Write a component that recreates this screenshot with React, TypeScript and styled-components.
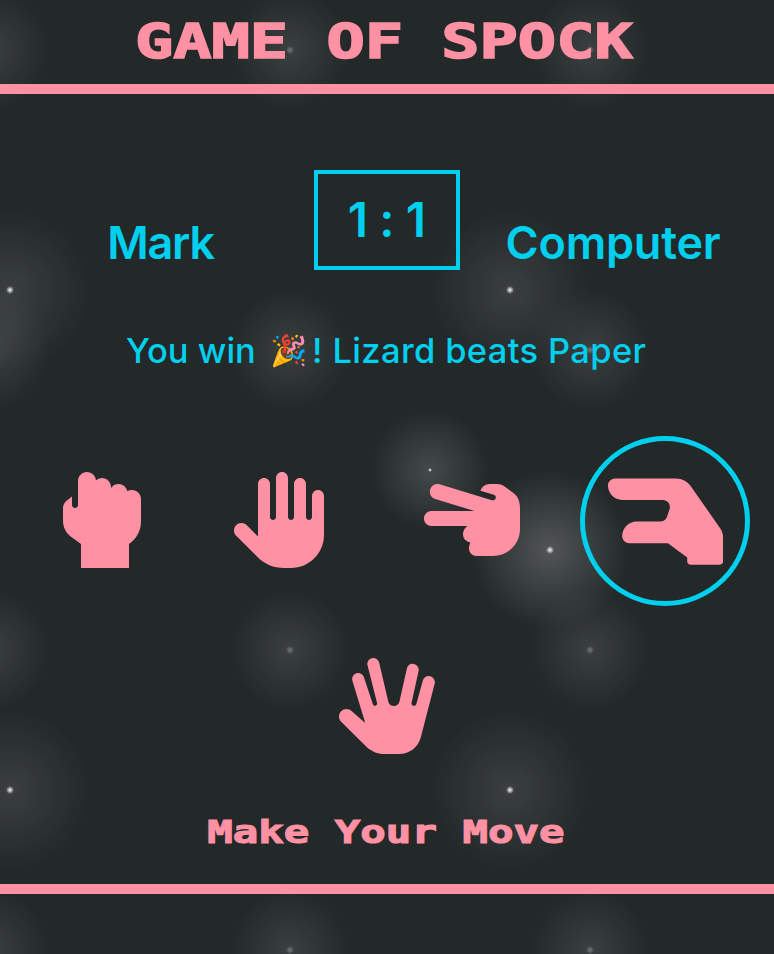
import React from "react";
import styled, { createGlobalStyle } from "styled-components";

const PINK = "#ff91a4";
const CYAN = "#00d0ee";

const GlobalStyle = createGlobalStyle`
  *, *::before, *::after { box-sizing: border-box; }
  html, body { margin: 0; padding: 0; background: #232829; }
`;

const Page = styled.div`
  height: 954px;
  overflow: hidden;
  color: ${CYAN};
  font-family: Inter, "Liberation Sans", sans-serif;
  background-color: #232829;
  background-image:
    radial-gradient(circle at 550px 550px, #fff, rgba(255, 255, 255, 0.2) 4px, transparent 80px),
    radial-gradient(circle at 430px 470px, #fff, rgba(255, 255, 255, 0.15) 2px, transparent 60px),
    radial-gradient(circle, #fff, rgba(255, 255, 255, 0.1) 4px, transparent 80px),
    radial-gradient(circle, rgba(255, 255, 255, 0.4), rgba(255, 255, 255, 0.1) 4px, transparent 60px);
  background-size: 774px 954px, 774px 954px, 500px 500px, 300px 300px;
  background-position: 0 0, 0 0, -240px 40px, 140px -100px;
`;

const Header = styled.header`
  height: 94px;
  padding: 0 6px 2px 0;
  border-bottom: 10px solid ${PINK};
  display: flex;
  justify-content: center;
  align-items: center;
`;

const PixelText = styled.h1<{ $size: number }>`
  margin: 0;
  color: ${PINK};
  font: 700 ${(p) => p.$size}px/1 "DejaVu Sans Mono", monospace;
  white-space: pre;
  transform: scaleX(1.325);
  -webkit-text-stroke: ${(p) => p.$size / 30}px ${PINK};
`;

const Main = styled.main`
  height: 800px;
  padding-top: 76px;
  border-bottom: 10px solid ${PINK};
  display: flex;
  flex-direction: column;
`;

const Scoreboard = styled.section`
  display: grid;
  grid-template-columns: 314px 146px 314px;
  height: 100px;
`;

const Player = styled.div<{ $left?: number; $right?: number; $spacing: number }>`
  display: flex;
  justify-content: center;
  padding: 46px ${(p) => p.$right ?? 0}px 0 ${(p) => p.$left ?? 0}px;
  font-size: 45px;
  font-weight: 560;
  line-height: 54px;
  letter-spacing: ${(p) => p.$spacing}px;
`;

const Score = styled.div`
  border: 4px solid ${CYAN};
  display: grid;
  grid-template-columns: repeat(3, 29px);
  justify-content: center;
  align-items: center;
  text-align: center;
  font-size: 48px;
  font-weight: 560;
  line-height: 90px;
`;

const Message = styled.p`
  display: flex;
  margin: 56px 0 0;
  padding-left: 126px;
  height: 50px;
  line-height: 49px;
  white-space: pre;
  font-size: 34.5px;
  font-weight: 550;
`;

const Emoji = styled.span`
  width: 42px;
  margin-left: 5px;
  font-size: 30px;
`;

const Outcome = styled.span`
  letter-spacing: 0.35px;
`;

const Moves = styled.section`
  display: flex;
  height: 170px;
  margin-top: 60px;
  padding-left: 57px;
  align-items: center;
`;

const Move = styled.button<{ $gap?: number }>`
  width: 96px;
  height: 96px;
  margin: 0 ${(p) => p.$gap ?? 0}px 2px 0;
  padding: 0;
  border: 0;
  background: none;
  color: ${PINK};
`;

const ChosenMove = styled(Move)`
  width: 170px;
  height: 170px;
  margin: 0;
  padding: 2px 0 0 1px;
  display: flex;
  align-items: center;
  justify-content: center;
  border: 5px solid ${CYAN};
  border-radius: 50%;
`;

const Glyph = styled.svg<{ $size: number }>`
  display: block;
  flex: none;
  width: ${(p) => p.$size}px;
  height: ${(p) => p.$size}px;
  fill: currentColor;
`;

const LastMove = styled.section`
  display: flex;
  justify-content: center;
  margin-top: 52px;
`;

const Prompt = styled.footer`
  display: flex;
  justify-content: center;
  padding-right: 3px;
  margin-top: 60px;
`;

const hands = {
  rock: "M448 144v120.4C448 314.2 422.6 358.1 384 384v128H128v-128l-53.19-38.67C48 325.8 32 294.8 32 261.4V192c0-14.58 6.625-28.38 17.1-37.48L80 130.5V176C80 184.8 87.16 192 96 192S112 184.8 112 176v-128C112 21.48 133.5 0 160 0c25.38 0 45.96 19.77 47.67 44.73C216.2 36.9 227.5 32 240 32C266.5 32 288 53.48 288 80v5.531C296.6 72.57 311.3 64 328 64c23.47 0 42.94 16.87 47.11 39.14C382.4 98.7 390.9 96 400 96C426.5 96 448 117.5 448 144z",
  paper: "M480 128v208c0 97.05-78.95 176-176 176h-37.72c-53.42 0-103.7-20.8-141.4-58.58l-113.1-113.1C3.906 332.5 0 322.2 0 312C0 290.7 17.15 272 40 272c10.23 0 20.47 3.906 28.28 11.72L128 343.4V64c0-17.67 14.33-32 32-32s32 14.33 32 32v176C192 248.8 199.2 256 208 256s16-7.2 16-16V32c0-17.67 14.33-32 32-32s32 14.33 32 32v208c0 8.8 7.2 16 16 16S320 248.8 320 240V64c0-17.67 14.33-32 32-32s32 14.33 32 32v176C384 248.8 391.2 256 400 256s16-7.2 16-16V128c0-17.67 14.33-32 32-32S480 110.3 480 128z",
  scissors: "M512 192V304C512 383.5 447.5 448 368 448H280C257.9 448 240 430.1 240 408C240 396 243 386 247 375.5C224 372 208 354 208 332C208 313 217 299 231 288H40C17.9 288 0 270.1 0 248S17.9 208 40 208H269L60 143.4C39 137 27 115 33 93.5C39 72 61 60 82.5 65.5L362 150.5C371 153.3 380 148 382.5 140C385 131.6 380.5 123.5 372 121L301 99.5C309 79 328 64 350 64H389C403 64 417 68 428 76.5L480 115C500 130 512 158 512 192z",
  lizard: "M512 329.1V432c0 8.836-7.164 16-16 16H368c-8.836 0-16-7.164-16-16V416l-85.33-64H95.1c-16.47 0-31.44-13.44-31.96-29.9C62.87 285.8 91.96 256 127.1 256h104.9c13.77 0 26-8.811 30.36-21.88l10.67-32C280.9 181.4 265.4 160 243.6 160H63.1C27.95 160-1.129 130.2 .0352 93.9C.5625 77.44 15.53 64 31.1 64h271.2c26.26 0 50.84 12.88 65.79 34.47l128.8 185.1C507 297.8 512 313.2 512 329.1z",
  spock: "M11.7 340.3C-4 324.6-4 299.3 11.7 283.7S52.7 268 68.3 283.7L140 347L71.5 121C66.5 104 76 86 93.5 81C110 76 128 86 133 103L180 245C182.5 252 188 256 195 254C201 252.5 204 247 203 240L152 38.5C148 21 158 5 175 1C192-3 210 7 214 24.5L263 233C267 247 278 256 292 256C307 256 319 247 322.5 232L362 56C366 39 382 28 399 32C416 35.5 428 52 424.5 69L387 239C385.5 247 390 253 397 255C405 256.5 411 252 413 244L447 120C451.5 103 469 93 486 97C503 101.5 515 119 510.5 136L436 424C422 476 376 512 322 512H242C206 512 172 498 146 473z",
};

const Hand = ({ kind, size = 96 }: { kind: keyof typeof hands; size?: number }) => (
  <Glyph $size={size} viewBox="0 0 512 512" aria-hidden="true">
    <path d={hands[kind]} />
  </Glyph>
);

export default function App() {
  return (
    <>
      <GlobalStyle />
      <Page>
        <Header>
          <PixelText $size={48}>GAME OF SPOCK</PixelText>
        </Header>
        <Main>
          <Scoreboard>
            <Player $left={7} $spacing={-1.2}>Mark</Player>
            <Score>
              <span>1</span>
              <span>:</span>
              <span>1</span>
            </Score>
            <Player $right={8} $spacing={-0.2}>Computer</Player>
          </Scoreboard>
          <Message>
            <span>You win </span>
            <Emoji>🎉</Emoji>
            <Outcome>! Lizard beats Paper</Outcome>
          </Message>
          <Moves>
            <Move $gap={81} aria-label="Rock"><Hand kind="rock" /></Move>
            <Move $gap={94} aria-label="Paper"><Hand kind="paper" /></Move>
            <Move $gap={60} aria-label="Scissors"><Hand kind="scissors" /></Move>
            <ChosenMove aria-label="Lizard"><Hand kind="lizard" size={115.2} /></ChosenMove>
          </Moves>
          <LastMove>
            <Move aria-label="Spock"><Hand kind="spock" /></Move>
          </LastMove>
          <Prompt>
            <PixelText as="h2" $size={32}>Make Your Move</PixelText>
          </Prompt>
        </Main>
      </Page>
    </>
  );
}
